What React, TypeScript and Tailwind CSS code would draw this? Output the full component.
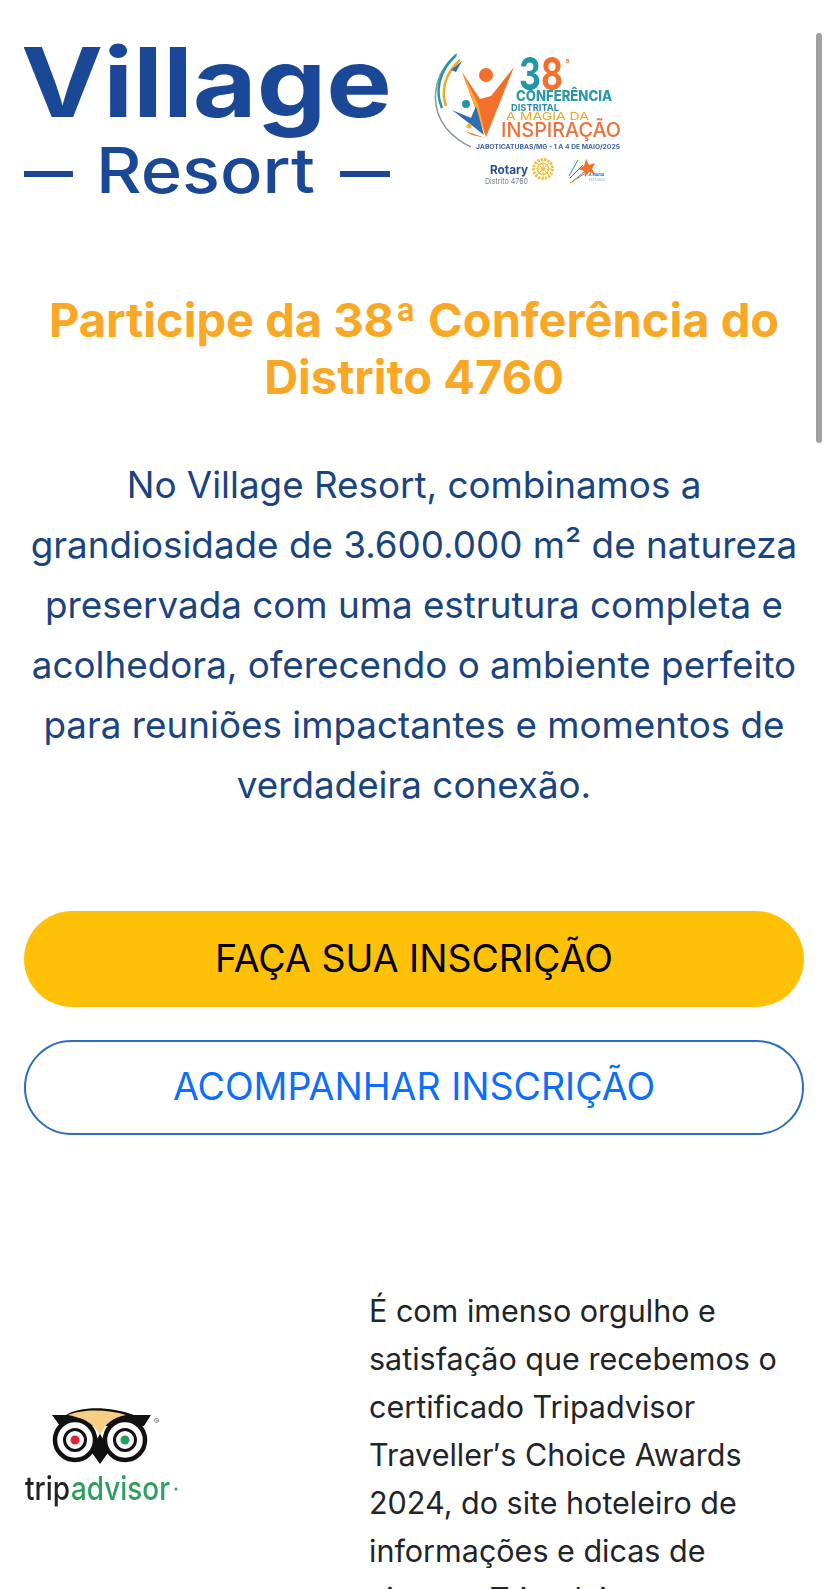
import React from 'react';

const VillageLogo = () => (
  <svg viewBox="0 0 368 160" className="w-[368px] h-[160px] shrink-0 blur-[0.5px]">
    <g fill="#1a4896" fontFamily="Inter, sans-serif">
      <text x="-3" y="77" fontSize="96" fontWeight="650" textLength="371" lengthAdjust="spacingAndGlyphs">Village</text>
      <text x="72" y="153" fontSize="63" fontWeight="500" textLength="219" lengthAdjust="spacingAndGlyphs">Resort</text>
      <rect x="0" y="131" width="49" height="6" />
      <rect x="316" y="131" width="50" height="6" />
    </g>
  </svg>
);

const ConferenceLogo = () => (
  <svg viewBox="430 45 200 150" className="w-[200px] h-[150px] shrink-0 mt-[5px] blur-[0.4px]" fontFamily="Inter, sans-serif">
    {/* swooshes */}
    <path d="M457 54C434 72 428 104 446 128C452 135 462 143 471 147" fill="none" stroke="#8f9a94" strokeWidth="1.5" />
    <path d="M456 55C438 72 435 92 442 108" fill="none" stroke="#1f9aa5" strokeWidth="2.5" />
    <path d="M460 60C444 74 441 92 446 106" fill="none" stroke="#f5a623" strokeWidth="2.5" />
    <path d="M462 61L451 70L456 72Z" fill="#2f6db5" />
    {/* figures */}
    <path d="M462 72L486 137L514 67L491 96L480 99Z" fill="#f26f2c" />
    <path d="M462 72L486 137L478 104Z" fill="#f9ae2d" />
    <circle cx="486" cy="75" r="7" fill="#f26f2c" />
    <circle cx="466" cy="104" r="4" fill="#2098a8" />
    <path d="M452 110L471 118L476 106L484 135L470 124Z" fill="#2f6db5" />
    <circle cx="469" cy="126" r="2.5" fill="#f9ae2d" />
    <path d="M465 131L486 138L472 135Z" fill="#f26f2c" />
    {/* wordmark */}
    <text x="519" y="90" fontSize="45" fontWeight="700" fill="#2098a8" textLength="44" lengthAdjust="spacingAndGlyphs">3<tspan fill="#f26f2c">8</tspan></text>
    <text x="565" y="66" fontSize="10" fontWeight="600" fill="#f26f2c">ª</text>
    <text x="516" y="101" fontSize="14" fontWeight="800" fill="#2a9aa8" textLength="96" lengthAdjust="spacingAndGlyphs">CONFERÊNCIA</text>
    <text x="511" y="110.5" fontSize="9.5" fontWeight="700" fill="#2a8aa8" textLength="48" lengthAdjust="spacingAndGlyphs">DISTRITAL</text>
    <text x="506" y="120" fontSize="11" fill="#f5a623" textLength="83" lengthAdjust="spacingAndGlyphs">A MAGIA DA</text>
    <text x="501" y="136.5" fontSize="20" fontWeight="500" fill="#f0703a" textLength="120" lengthAdjust="spacingAndGlyphs">INSPIRAÇÃO</text>
    <text x="476" y="149" fontSize="6.5" fontWeight="700" fill="#3a66a8" textLength="144" lengthAdjust="spacingAndGlyphs">JABOTICATUBAS/MG - 1 A 4 DE MAIO/2025</text>
    <text x="490" y="174" fontSize="12" fontWeight="700" fill="#2a4f8f" textLength="38" lengthAdjust="spacingAndGlyphs">Rotary</text>
    <text x="485" y="184" fontSize="8" fill="#6f7f96" textLength="43" lengthAdjust="spacingAndGlyphs">Distrito 4760</text>
    {/* rotary wheel */}
    <circle cx="543" cy="169" r="9.5" fill="none" stroke="#f2c14e" strokeWidth="3" strokeDasharray="2.5 1" />
    <circle cx="543" cy="169" r="5.5" fill="none" stroke="#f2c14e" strokeWidth="1.5" />
    <path d="M543 160V178M534 169H552M537 163L549 175M549 163L537 175" stroke="#f2c14e" strokeWidth="1" />
    <circle cx="543" cy="169" r="2" fill="#f2c14e" />
    {/* a magia star */}
    <path d="M586 159L589 165L595 163L592 169L595 174L589 172L585 177L584 171L578 169L584 166Z" fill="#f26f2c" />
    <path d="M570 178L583 165M572 182L584 172M569 176L578 160" stroke="#2098a8" strokeWidth="1" />
    <path d="M570 183L584 174" stroke="#f26f2c" strokeWidth="1" />
    <text x="589" y="176" fontSize="3.5" fontWeight="700" fill="#2f6db5">A MAGIA</text>
    <text x="589" y="181" fontSize="3" fill="#7aa0c8">ESTÁ AQUI</text>
  </svg>
);

const TripadvisorLogo = () => (
  <svg viewBox="0 0 160 115" className="w-[160px] h-[115px] shrink-0 blur-[0.4px]" fontFamily="Inter, sans-serif">
    <path d="M28 11H42C56 2 86 2 110 11H127L120 22H36Z" fill="#111" />
    <path d="M44 11C58 5 84 5 102 11C90 13 80 20 76 32C72 20 56 13 44 11Z" fill="#f6cf85" />
    <path d="M66 46L76 30L86 46L76 60Z" fill="#111" />
    <g fill="#fff" stroke="#111">
      <circle cx="51" cy="36" r="20" strokeWidth="4.5" />
      <circle cx="101" cy="36" r="20" strokeWidth="4.5" />
      <circle cx="51" cy="36" r="10.5" strokeWidth="3" />
      <circle cx="101" cy="36" r="10.5" strokeWidth="3" />
    </g>
    <circle cx="51" cy="36" r="4.5" fill="#e3212f" />
    <circle cx="101" cy="36" r="4.5" fill="#1fa35c" />
    <text x="130" y="20" fontSize="8" fill="#555">®</text>
    <text x="1" y="96" fontSize="33" fontWeight="500" fill="#222" textLength="45" lengthAdjust="spacingAndGlyphs">trip</text>
    <text x="47" y="96" fontSize="33" fontWeight="500" fill="#2f9e5f" textLength="99" lengthAdjust="spacingAndGlyphs">advisor</text>
    <circle cx="152" cy="85" r="1.5" fill="#2f9e5f" />
  </svg>
);

export default function App() {
  return (
    <div className="relative h-[1589px] overflow-hidden bg-white font-['Inter',sans-serif]">
      {/* scrollbar */}
      <div className="absolute right-[6px] top-[33px] w-[6px] h-[410px] rounded-full bg-[#a0a0a0]" />

      <div className="px-6">
        <div className="flex items-start pt-10 gap-[38px]">
          <VillageLogo />
          <ConferenceLogo />
        </div>

        <h1 className="mt-[91px] text-center text-[47px] leading-[57px] font-bold text-[#f9a825]">
          Participe da 38ª Conferência do Distrito 4760
        </h1>

        <p className="mt-[50px] text-center text-[36.8px] leading-[60px] text-[#1a4480]">
          No Village Resort, combinamos a grandiosidade de 3.600.000 m² de natureza preservada com uma estrutura completa e acolhedora, oferecendo o ambiente perfeito para reuniões impactantes e momentos de verdadeira conexão.
        </p>

        <div className="mt-[96px] flex flex-col gap-[33px]">
          <button className="h-[96px] rounded-full bg-[#ffc107] text-[37.5px] text-black">FAÇA SUA INSCRIÇÃO</button>
          <button className="h-[95px] rounded-full border-2 border-[#2b6cc4] text-[37.5px] text-[#0d6efd]">ACOMPANHAR INSCRIÇÃO</button>
        </div>

        <div className="mt-[152px] flex items-start">
          <div className="w-[345px] shrink-0 pt-[117px]">
            <TripadvisorLogo />
          </div>
          <p className="text-[30.5px] leading-[48px] text-[#212529]">
            É com imenso orgulho e satisfação que recebemos o certificado Tripadvisor Traveller′s Choice Awards 2024, do site hoteleiro de informações e dicas de viagens Tripadvisor
          </p>
        </div>
      </div>
    </div>
  );
}
